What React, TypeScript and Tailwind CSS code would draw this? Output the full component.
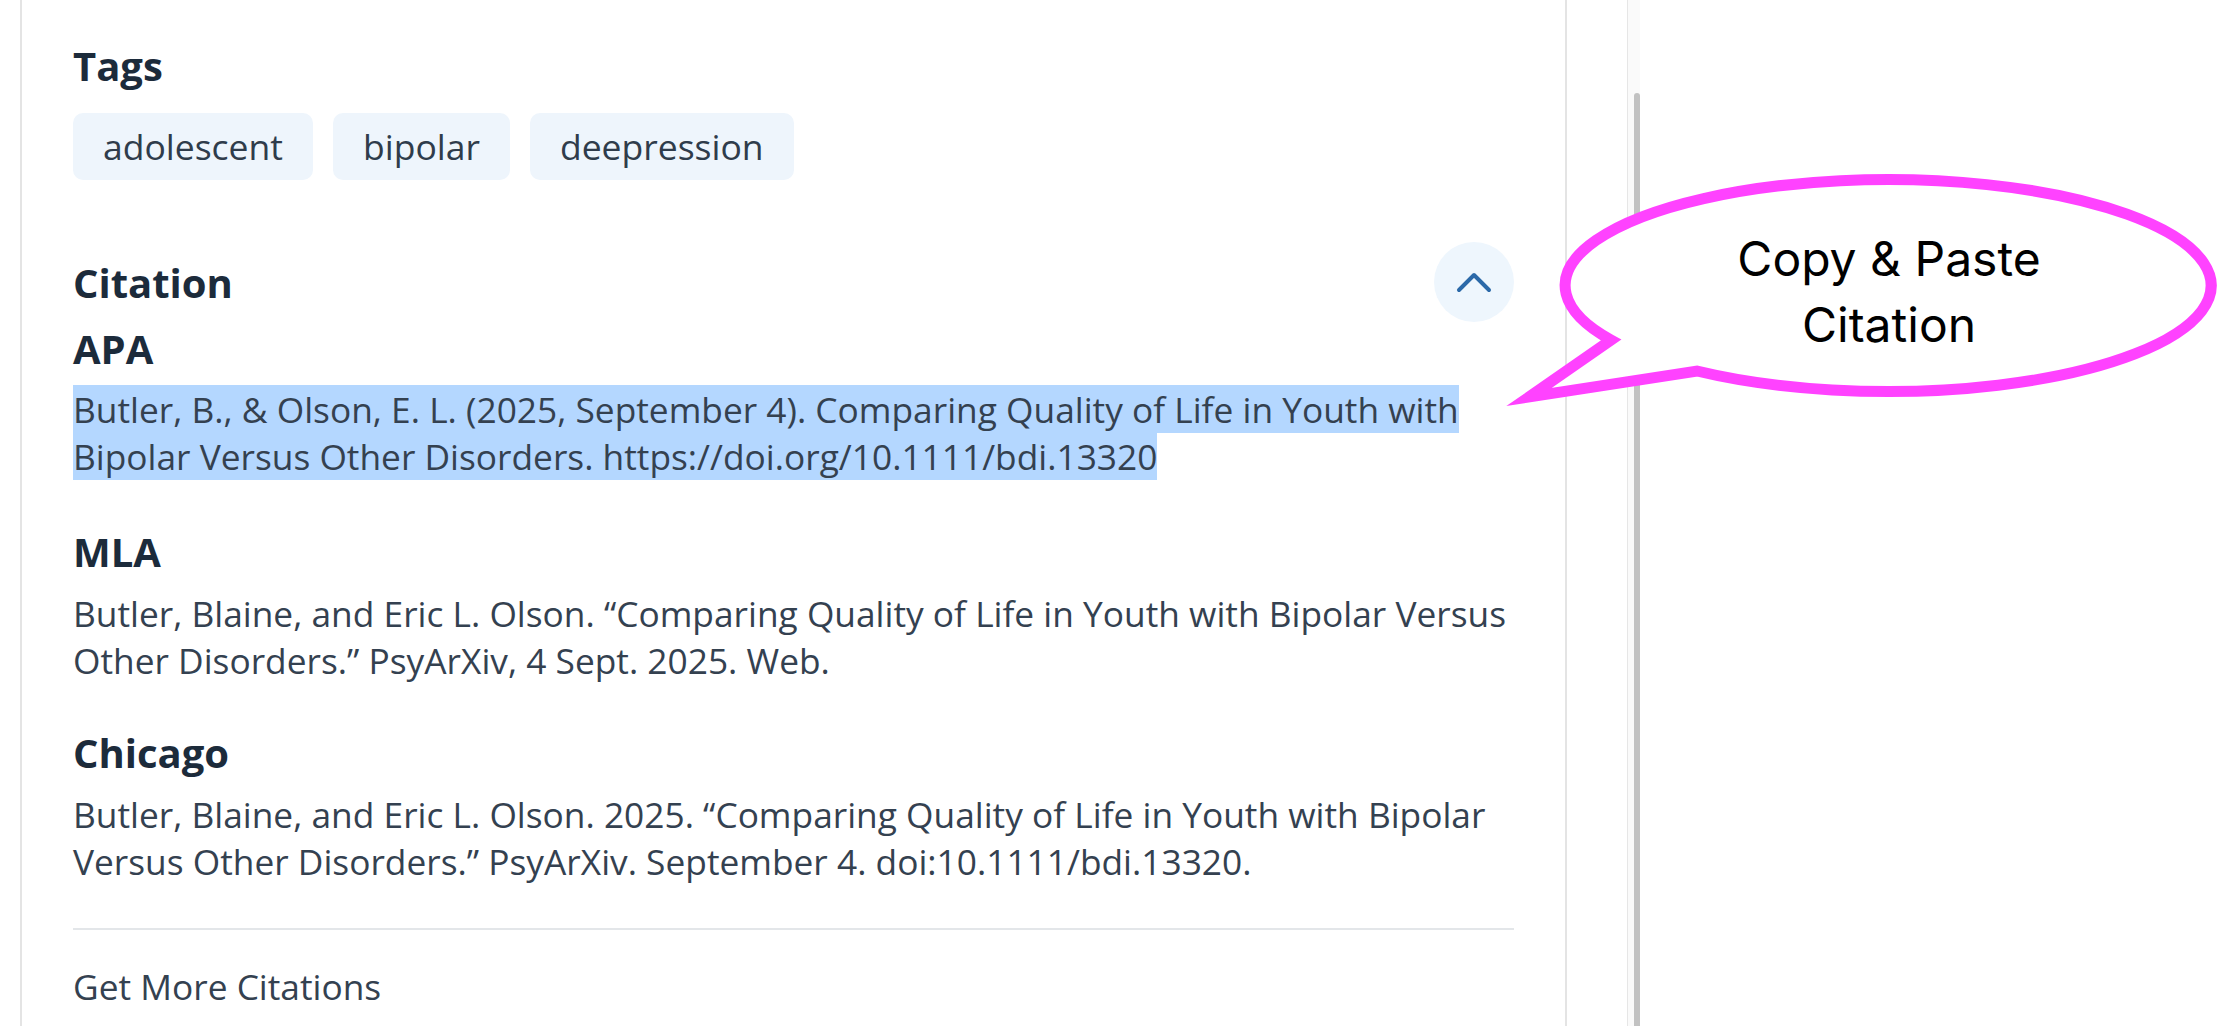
import React from "react";

const Heading = ({ children, className = "" }: { children: React.ReactNode; className?: string }) => (
  <h2 className={`text-[40px] leading-[47px] font-bold text-[#1c2b3b] ${className}`}>{children}</h2>
);

const Body = ({ children, className = "" }: { children: React.ReactNode; className?: string }) => (
  <p className={`text-[35.3px] leading-[47px] text-[#344150] ${className}`}>{children}</p>
);

export default function App() {
  return (
    <div className="relative w-[2222px] h-[1026px] overflow-hidden bg-white font-['Open_Sans',sans-serif] flex">
      {/* main panel */}
      <div className="ml-[20px] w-[1547px] h-full shrink-0 border-l-2 border-r-2 border-[#e4e4e4] px-[51px] pt-[42px]">
        <Heading>Tags</Heading>
        <div className="mt-[24px] flex gap-[20px]">
          {["adolescent", "bipolar", "deepression"].map((t) => (
            <span
              key={t}
              className="px-[30px] py-[10px] rounded-[10px] bg-[#eef5fc] text-[35.5px] leading-[47px] text-[#2f3c4b]"
            >
              {t}
            </span>
          ))}
        </div>

        <div className="mt-[62px] h-[80px] flex items-center justify-between">
          <Heading>Citation</Heading>
          <button className="w-[80px] h-[80px] rounded-full bg-[#eef6fd] flex items-center justify-center">
            <svg width="36" height="22" viewBox="0 0 36 22" fill="none">
              <polyline
                points="3,19 18,4 33,19"
                stroke="#2b69a8"
                strokeWidth="4"
                strokeLinecap="round"
                strokeLinejoin="round"
              />
            </svg>
          </button>
        </div>

        <Heading className="mt-[3px]">APA</Heading>
        <Body className="mt-[14px]">
          <span className="bg-[#b4d7ff]">
            Butler, B., &amp; Olson, E. L. (2025, September 4). Comparing Quality of Life in Youth with Bipolar Versus
            Other Disorders. https://doi.org/10.1111/bdi.13320
          </span>
        </Body>

        <Heading className="mt-[48px]">MLA</Heading>
        <Body className="mt-[15px]">
          Butler, Blaine, and Eric L. Olson. “Comparing Quality of Life in Youth with Bipolar Versus Other
          Disorders.” PsyArXiv, 4 Sept. 2025. Web.
        </Body>

        <Heading className="mt-[45px]">Chicago</Heading>
        <Body className="mt-[15px]">
          Butler, Blaine, and Eric L. Olson. 2025. “Comparing Quality of Life in Youth with Bipolar Versus Other
          Disorders.” PsyArXiv. September 4. doi:10.1111/bdi.13320.
        </Body>

        <div className="mt-[43px] h-[2px] bg-[#e3e6e9]" />
        <Body className="mt-[33px] text-[#3a4655]">Get More Citations</Body>
      </div>

      {/* scrollbar */}
      <div className="ml-[60px] w-[13px] h-full shrink-0 border-l border-[#e6e6e6] bg-[#fafafa] pt-[93px] pl-[6px] flex flex-col">
        <div className="flex-1 w-[6px] rounded-t-[3px] bg-[#c2c2c2]" />
      </div>

      {/* speech bubble annotation */}
      <svg
        className="absolute left-[1480px] top-[150px]"
        width="742"
        height="280"
        viewBox="1480 150 742 280"
        fill="none"
      >
        <path
          d="M 1611 340 A 323 106 0 1 1 1697 371 L 1529 397 Z"
          fill="white"
          stroke="#ff42ff"
          strokeWidth="11"
          strokeLinejoin="miter"
          strokeMiterlimit="10"
        />
      </svg>
      <div className="absolute left-[1689px] top-[226px] w-[400px] text-center font-['Inter',sans-serif] text-[48px] leading-[66px] text-black">
        <div>Copy &amp; Paste</div>
        <div>Citation</div>
      </div>
    </div>
  );
}
